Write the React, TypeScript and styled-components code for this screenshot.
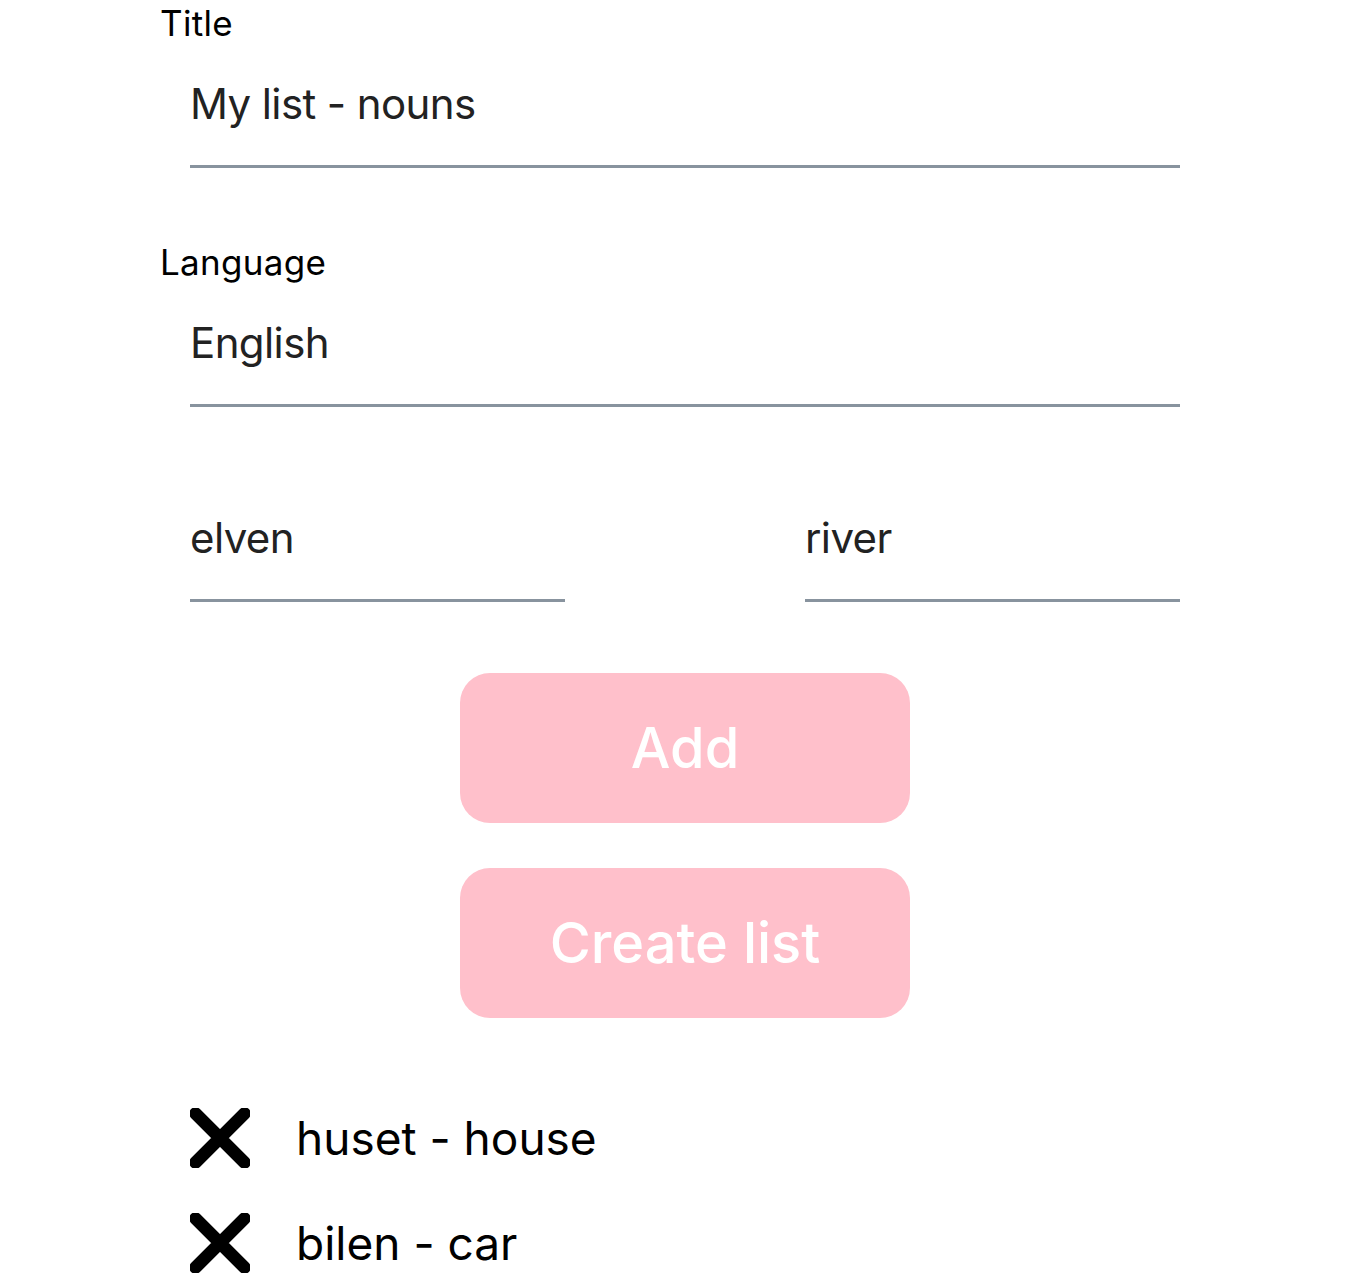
import { useState } from "react";
import styled, { createGlobalStyle } from "styled-components";

const GlobalStyle = createGlobalStyle`
  body {
    margin: 0;
    background: #ffffff;
    font-family: Inter, "Noto Sans", sans-serif;
  }
`;

const Page = styled.div`
  width: 990px;
  margin: 0 auto;
  display: flex;
  flex-direction: column;
`;

const Field = styled.div<{ $last?: boolean }>`
  display: flex;
  flex-direction: column;
  margin-bottom: ${(p) => (p.$last ? "0" : "71px")};
`;

const Label = styled.label`
  display: block;
  margin-left: -30px;
  height: 46px;
  line-height: 46px;
  font-size: 35px;
  letter-spacing: 0.3px;
  color: #000000;
`;

const TextInput = styled.input<{ $width?: number }>`
  box-sizing: border-box;
  width: ${(p) => (p.$width ? `${p.$width}px` : "100%")};
  height: 122px;
  padding: 0 0 4px 0;
  margin: 0;
  border: none;
  border-bottom: 3px solid #88939e;
  border-radius: 0;
  outline: none;
  background: transparent;
  font-family: Inter, "Noto Sans", sans-serif;
  font-size: 42px;
  letter-spacing: -0.6px;
  color: #222222;
`;

const WordRow = styled.div`
  display: flex;
  justify-content: space-between;
  margin-top: 73px;
`;

const Buttons = styled.div`
  display: flex;
  flex-direction: column;
  align-items: center;
  gap: 45px;
  margin-top: 71px;
`;

const PinkButton = styled.button`
  width: 450px;
  height: 150px;
  border: none;
  border-radius: 30px;
  background: #ffc0cb;
  color: #ffffff;
  font-family: Inter, "Noto Sans", sans-serif;
  font-size: 56px;
  font-weight: 500;
  cursor: pointer;
`;

const WordList = styled.ul`
  list-style: none;
  margin: 90px 0 0 0;
  padding: 0;
  display: flex;
  flex-direction: column;
  gap: 45px;
`;

const WordItem = styled.li`
  display: flex;
  align-items: center;
  height: 60px;
  gap: 46px;
  font-size: 46px;
  color: #000000;
`;

const RemoveButton = styled.button`
  width: 60px;
  height: 60px;
  padding: 0;
  border: none;
  background: transparent;
  cursor: pointer;
  display: flex;
`;

const CloseIcon = () => (
  <svg width="60" height="60" viewBox="0 0 60 60">
    <path
      d="M5.5 5.5 L54.5 54.5 M54.5 5.5 L5.5 54.5"
      stroke="#000"
      strokeWidth="12.5"
      strokeLinecap="round"
      fill="none"
    />
  </svg>
);

export default function App() {
  const [words, setWords] = useState([
    { word: "huset", translation: "house" },
    { word: "bilen", translation: "car" },
  ]);

  const removeHandler = (index: number) => {
    setWords(words.filter((_, i) => i !== index));
  };

  return (
    <>
      <GlobalStyle />
      <Page>
        <Field>
          <Label>Title</Label>
          <TextInput defaultValue="My list - nouns" />
        </Field>
        <Field $last>
          <Label>Language</Label>
          <TextInput defaultValue="English" />
        </Field>
        <WordRow>
          <TextInput $width={375} defaultValue="elven" />
          <TextInput $width={375} defaultValue="river" />
        </WordRow>
        <Buttons>
          <PinkButton>Add</PinkButton>
          <PinkButton>Create list</PinkButton>
        </Buttons>
        <WordList>
          {words.map((el, index) => (
            <WordItem key={index}>
              <RemoveButton onClick={() => removeHandler(index)}>
                <CloseIcon />
              </RemoveButton>
              <span>
                {el.word} - {el.translation}
              </span>
            </WordItem>
          ))}
        </WordList>
      </Page>
    </>
  );
}
